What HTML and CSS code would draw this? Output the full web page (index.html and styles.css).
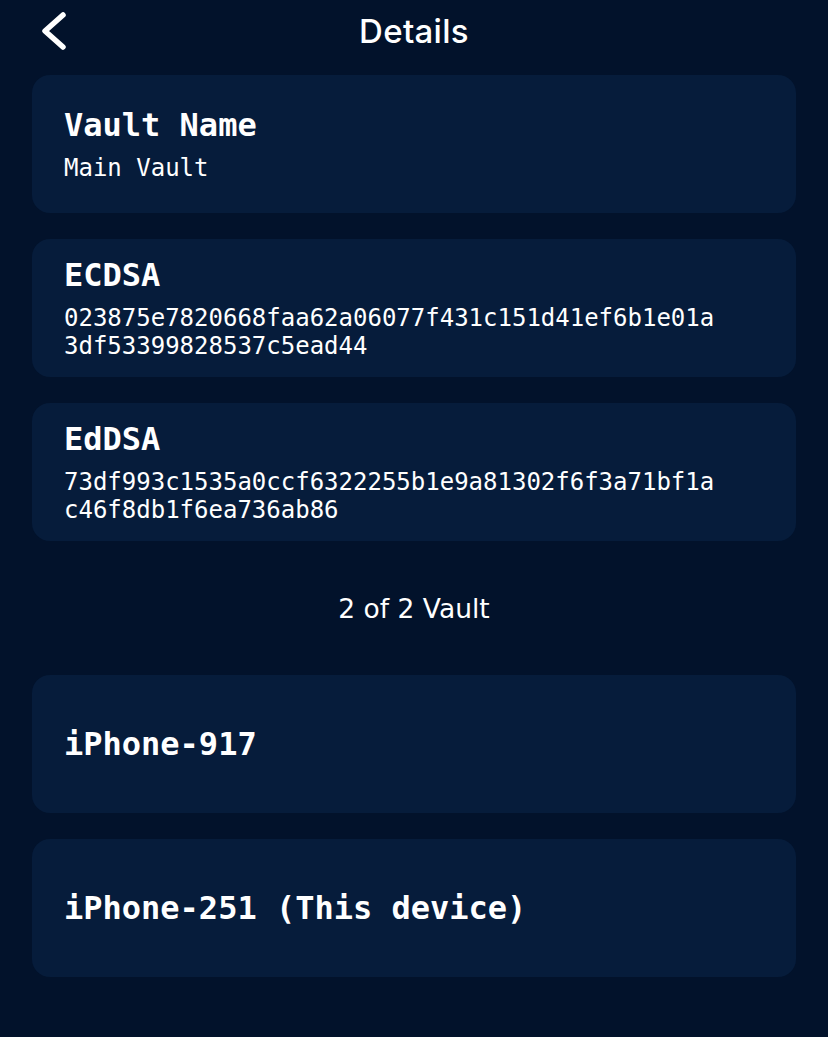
FILE: index.html
```html
<!DOCTYPE html>
<html lang="en">
<head>
<meta charset="utf-8">
<title>Details</title>
<link rel="stylesheet" href="styles.css">
</head>
<body>
<div class="screen">
  <header class="topbar">
    <div class="back">
      <svg width="30" height="44" viewBox="0 0 30 44" aria-hidden="true">
        <path d="M23 6 L5 22 L23 38" fill="none" stroke="#ffffff" stroke-width="5.5" stroke-linecap="round" stroke-linejoin="round"/>
      </svg>
    </div>
    <h1 class="title">Details</h1>
    <div class="spacer"></div>
  </header>

  <main class="list">
    <section class="card">
      <div class="card-title">Vault Name</div>
      <div class="card-value">Main Vault</div>
    </section>
    <section class="card">
      <div class="card-title">ECDSA</div>
      <div class="card-value hex">023875e7820668faa62a06077f431c151d41ef6b1e01a3df53399828537c5ead44</div>
    </section>
    <section class="card">
      <div class="card-title">EdDSA</div>
      <div class="card-value hex">73df993c1535a0ccf6322255b1e9a81302f6f3a71bf1ac46f8db1f6ea736ab86</div>
    </section>

    <div class="count">2 of 2 Vault</div>

    <section class="card">
      <div class="card-title">iPhone-917</div>
    </section>
    <section class="card">
      <div class="card-title">iPhone-251 (This device)</div>
    </section>
  </main>
</div>
</body>
</html>
```

FILE: styles.css
```css
html, body {
  margin: 0;
  padding: 0;
  background: #02122b;
}

body {
  color: #ffffff;
  font-family: "DejaVu Sans Mono", "Liberation Mono", monospace;
}

.screen {
  width: 828px;
  min-height: 1037px;
  padding: 0 32px;
  box-sizing: border-box;
}

.topbar {
  height: 62px;
  display: grid;
  grid-template-columns: 1fr auto 1fr;
  align-items: center;
  margin-bottom: 13px;
}

.back {
  display: flex;
  align-items: center;
  margin-left: 8px;
}

.back svg {
  display: block;
}

.title {
  margin: 0;
  font-family: Inter, "Noto Sans", sans-serif;
  font-size: 33px;
  font-weight: 500;
  letter-spacing: 0.3px;
  line-height: 62px;
}

.list {
  display: flex;
  flex-direction: column;
  gap: 26px;
}

.card {
  height: 138px;
  box-sizing: border-box;
  background: #061c3b;
  border-radius: 18px;
  padding: 0 32px;
  display: flex;
  flex-direction: column;
  justify-content: center;
}

.card-title {
  font-size: 32px;
  font-weight: bold;
  line-height: 38px;
}

.card-value {
  margin-top: 10px;
  font-size: 24px;
  line-height: 28px;
  max-width: 656px;
}

.hex {
  word-break: break-all;
}

.count {
  height: 82px;
  display: flex;
  align-items: center;
  justify-content: center;
  font-family: "DejaVu Sans", "Open Sans", sans-serif;
  font-size: 26.5px;
  font-weight: 400;
}
```
